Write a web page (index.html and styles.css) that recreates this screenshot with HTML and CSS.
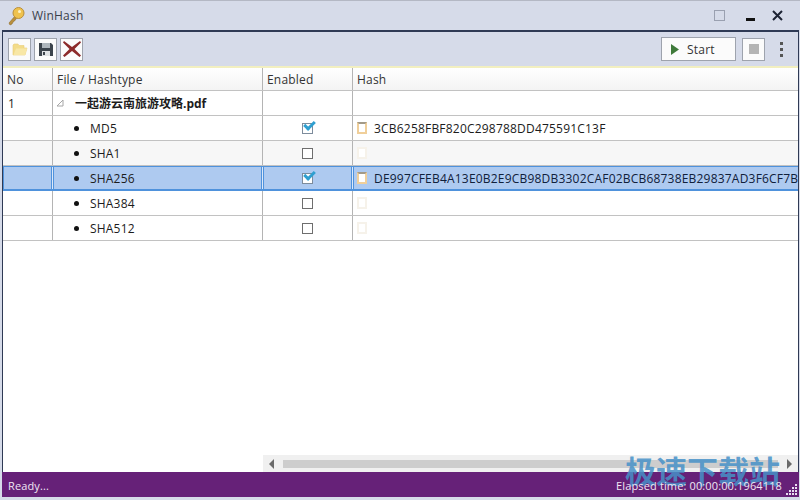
FILE: index.html
```html
<!DOCTYPE html>
<html lang="en">
  <head>
    <meta charset="UTF-8" />
    <title>WinHash</title>
    <link rel="stylesheet" href="styles.css">
  </head>
  <body>
    <div class="window">
      <div class="titlebar">
        <svg class="app-icon" width="18" height="20" viewBox="0 0 18 20">
          <path d="M8 10 L2 17 L3 19 L5 18 L6 16 L7.500 15 L10.500 11" fill="#b98f3c" stroke="#8d6b2a" stroke-width=".6" />
          <circle cx="11.500" cy="7" r="5.500" fill="#efc24e" stroke="#b98f3c" />
          <circle cx="12.500" cy="5.500" r="1.500" fill="#fff3c4" />
        </svg>
        <span class="title">WinHash</span>
        <div class="win-buttons">
          <span class="win-max"></span>
          <span class="win-min"></span>
          <svg class="win-close" width="11" height="11" viewBox="0 0 11 11">
            <path d="M1 1 L10 10 M10 1 L1 10" stroke="#1c2333" stroke-width="2" />
          </svg>
        </div>
      </div>

      <div class="frame">
        <div class="toolbar">
          <button class="tool-btn">
            <svg width="16" height="16" viewBox="0 0 16 16">
              <path d="M1 14 V4 L2 3 H6 L7 4.500 H12 V7 H15 L13 14 Z" fill="#f3dc8a" stroke="#e9cf78" stroke-width=".6" />
              <path d="M1.500 14 L4 7.500 H15 L13 14 Z" fill="#f8e7a6" />
            </svg>
          </button>
          <button class="tool-btn">
            <svg width="16" height="16" viewBox="0 0 16 16">
              <path d="M1 2 H13 L15 4 V15 H1 Z" fill="#3c444c" />
              <rect x="4" y="2" width="8" height="5" fill="#aeb6bc" />
              <rect x="4" y="10" width="8" height="5" fill="#dfe2e4" />
              <rect x="5" y="11" width="2" height="3" fill="#3c444c" />
            </svg>
          </button>
          <button class="tool-btn">
            <svg width="20" height="18" viewBox="0 0 20 18">
              <path d="M2 1 L10 7 L18 1 L19 2.500 L12.500 9 L19 15.500 L17.500 17 L10 11 L2.500 17 L1 15.500 L7.500 9 L1 2.500 Z" fill="#8c2a2a" />
            </svg>
          </button>
          <div class="spacer"></div>
          <button class="start-btn">
            <svg width="10" height="11" viewBox="0 0 10 11"><path d="M1 0 L9 5.500 L1 11 Z" fill="#3f7a3a" /></svg>
            Start
          </button>
          <button class="tool-btn stop-btn"><span class="stop-square"></span></button>
          <div class="grip"><i></i><i></i><i></i></div>
        </div>

        <div class="content">
          <div class="row head">
            <div class="cell">No</div>
            <div class="cell">File / Hashtype</div>
            <div class="cell">Enabled</div>
            <div class="cell">Hash</div>
          </div>

          <div class="row">
            <div class="cell no">1</div>
            <div class="cell file-cell">
              <svg class="expander" width="8" height="8" viewBox="0 0 8 8"><path d="M7 1 V7 H1 Z" fill="#fff" stroke="#a6a6a6" /></svg>
              <b>一起游云南旅游攻略.pdf</b>
            </div>
            <div class="cell"></div>
            <div class="cell"></div>
          </div>

          <div class="row">
            <div class="cell"></div>
            <div class="cell type"><span class="bullet"></span>MD5</div>
            <div class="cell check"><span class="box on"></span></div>
            <div class="cell hash"><span class="clip"></span>3CB6258FBF820C298788DD475591C13F</div>
          </div>

          <div class="row alt">
            <div class="cell"></div>
            <div class="cell type"><span class="bullet"></span>SHA1</div>
            <div class="cell check"><span class="box"></span></div>
            <div class="cell hash"><span class="clip off"></span></div>
          </div>

          <div class="row selected">
            <div class="cell"></div>
            <div class="cell type"><span class="bullet"></span>SHA256</div>
            <div class="cell check"><span class="box on"></span></div>
            <div class="cell hash"><span class="clip"></span><span class="hash-text">DE997CFEB4A13E0B2E9CB98DB3302CAF02BCB68738EB29837AD3F6CF7B</span></div>
          </div>

          <div class="row">
            <div class="cell"></div>
            <div class="cell type"><span class="bullet"></span>SHA384</div>
            <div class="cell check"><span class="box"></span></div>
            <div class="cell hash"><span class="clip off"></span></div>
          </div>

          <div class="row">
            <div class="cell"></div>
            <div class="cell type"><span class="bullet"></span>SHA512</div>
            <div class="cell check"><span class="box"></span></div>
            <div class="cell hash"><span class="clip off"></span></div>
          </div>

          <div class="scrollbar">
            <span class="arrow left"></span>
            <span class="thumb"></span>
            <span class="arrow right"></span>
          </div>
        </div>

        <div class="statusbar">
          <span>Ready...</span>
          <span class="elapsed">Elapsed time: 00:00:00.1964118</span>
          <svg class="resize" width="13" height="13" viewBox="0 0 13 13" fill="#e9dff0">
            <rect x="10" y="1" width="2" height="2" />
            <rect x="7" y="4" width="2" height="2" /><rect x="10" y="4" width="2" height="2" />
            <rect x="4" y="7" width="2" height="2" /><rect x="7" y="7" width="2" height="2" /><rect x="10" y="7" width="2" height="2" />
            <rect x="1" y="10" width="2" height="2" /><rect x="4" y="10" width="2" height="2" /><rect x="7" y="10" width="2" height="2" /><rect x="10" y="10" width="2" height="2" />
          </svg>
        </div>
      </div>
    </div>
    <div class="watermark">极速下载站</div>
  </body>
</html>
```

FILE: styles.css
```css
html, body {
  margin: 0;
  height: 100%;
  overflow: hidden;
}
body {
  font-family: "Open Sans", "Noto Sans CJK SC", sans-serif;
  font-size: 12px;
  letter-spacing: 0.2px;
  color: #1c1c1c;
  background: #d6dbe9;
  position: relative;
}
.window {
  height: 500px;
  display: flex;
  flex-direction: column;
  box-sizing: border-box;
  border-top: 1px solid #b4b8c4;
  padding: 0 1px 3px 2px;
}
.titlebar {
  height: 29px;
  display: flex;
  align-items: center;
  padding-left: 5px;
  flex: none;
}
.title {
  margin-left: 7px;
  color: #3a3f4a;
}
.win-buttons {
  margin-left: auto;
  display: flex;
  align-items: center;
  margin-right: 16px;
}
.win-max {
  width: 9px;
  height: 9px;
  border: 1px solid #9aa0b0;
}
.win-min {
  width: 9px;
  height: 3px;
  background: #111;
  margin: 7px 17px 0 21px;
}
.frame {
  flex: 1;
  display: flex;
  flex-direction: column;
  border: 1px solid #2f3a55;
  border-width: 2px 1px 0 1px;
  min-height: 0;
}
.toolbar {
  height: 34px;
  display: flex;
  align-items: center;
  gap: 3px;
  padding: 0 5px;
  flex: none;
  border-bottom: 2px solid #f2efc0;
}
.spacer {
  flex: 1;
}
.tool-btn {
  width: 23px;
  height: 23px;
  padding: 0;
  background: #fbfbfb;
  border: 1px solid #9ea3ad;
  display: flex;
  align-items: center;
  justify-content: center;
}
.start-btn {
  width: 75px;
  height: 24px;
  padding: 0 0 0 8px;
  margin-right: 3px;
  background: #fbfbfb;
  border: 1px solid #9ea3ad;
  display: flex;
  align-items: center;
  gap: 7px;
  font: inherit;
  letter-spacing: inherit;
  color: #333;
}
.stop-square {
  width: 10px;
  height: 10px;
  background: #b4b4b4;
}
.stop-btn {
  margin-right: 12px;
}
.grip {
  display: flex;
  flex-direction: column;
  gap: 3px;
  margin-right: 10px;
}
.grip i {
  width: 3px;
  height: 3px;
  background: #555;
}
.content {
  flex: 1;
  background: #fff;
  position: relative;
  min-height: 0;
  overflow: hidden;
}
.row {
  display: grid;
  grid-template-columns: 50px 210px 90px 1fr;
  height: 25px;
  box-sizing: border-box;
  border-bottom: 1px solid #c2c2c2;
}
.row.head {
  height: 23px;
  background: linear-gradient(#ffffff, #f4f4f4);
  color: #333;
}
.row.alt {
  background: #f7f7f7;
}
.cell {
  display: flex;
  align-items: center;
  padding-left: 4px;
  border-right: 1px solid #b4b4b4;
  white-space: nowrap;
  overflow: hidden;
}
.cell:last-child {
  border-right: none;
}
.no {
  padding-left: 5px;
}
.file-cell {
  padding-left: 3px;
  letter-spacing: 0;
}
.expander {
  margin-right: 11px;
}
.type {
  padding-left: 21px;
}
.bullet {
  width: 5px;
  height: 5px;
  border-radius: 50%;
  background: #111;
  margin-right: 11px;
}
.check {
  justify-content: center;
  padding: 0;
}
.box {
  width: 9px;
  height: 9px;
  border: 1px solid #6e6e6e;
  background: #fff;
  position: relative;
}
.box.on {
  border-color: #7d8c9c;
}
.box.on::after {
  content: "";
  position: absolute;
  left: 1px;
  top: -3px;
  width: 8px;
  height: 4px;
  border-left: 3px solid #2f9fd0;
  border-bottom: 3px solid #2f9fd0;
  transform: rotate(-45deg);
}
.hash {
  padding-left: 4px;
}
.clip {
  width: 6px;
  height: 8px;
  margin-right: 7px;
  flex: none;
  background: #fff;
  border: 2px solid #f0cf9a;
  border-top-color: #a39a88;
}
.clip.off {
  border-color: #f6f2ea;
}
.row.selected {
  background: #aecaf0;
  border-top: 1px solid #4f92dc;
  border-bottom: 2px solid #4f92dc;
}
.row.selected .cell {
  border-right: 1px solid #dce8f8;
  box-shadow: inset 1px 0 0 #4f92dc, inset -1px 0 0 #4f92dc;
}
.row.selected .cell:last-child {
  border-right: none;
  box-shadow: inset 1px 0 0 #4f92dc;
}
.hash-text {
  color: #10203a;
}
.scrollbar {
  position: absolute;
  left: 260px;
  right: 0;
  bottom: 0;
  height: 17px;
  background: #f0f0f0;
  display: flex;
  align-items: center;
  padding: 0 6px;
  gap: 9px;
}
.thumb {
  flex: 1;
  height: 8px;
  background: #cdcdcd;
}
.arrow {
  width: 0;
  height: 0;
  border-top: 5px solid transparent;
  border-bottom: 5px solid transparent;
}
.arrow.left {
  border-right: 5px solid #6a6a6a;
}
.arrow.right {
  border-left: 5px solid #6a6a6a;
}
.statusbar {
  height: 25px;
  flex: none;
  box-sizing: border-box;
  background: #662178;
  color: #f0e6f4;
  font-size: 11px;
  letter-spacing: 0.13px;
  display: flex;
  align-items: center;
  padding: 2px 1px 0 6px;
  margin: 0 -1px;
}
.elapsed {
  margin-left: auto;
  margin-right: 3px;
  position: relative;
  z-index: 1;
}
.resize {
  align-self: flex-end;
  margin-bottom: 1px;
}
.watermark {
  position: absolute;
  right: 20px;
  top: 451px;
  font-size: 31px;
  font-weight: 700;
  line-height: 38px;
  letter-spacing: 0;
  color: rgba(70, 145, 200, 0.85);
  font-family: "Noto Sans CJK SC", sans-serif;
}
```
